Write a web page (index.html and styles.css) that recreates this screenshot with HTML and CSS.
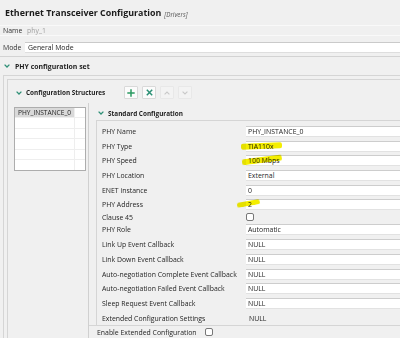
FILE: index.html
```html
<!DOCTYPE html>
<html>
<head>
<meta charset="utf-8">
<link rel="stylesheet" href="styles.css">
</head>
<body>
<div class="title"><span class="title-main">Ethernet Transceiver Configuration</span><span class="title-tag">[Drivers]</span></div>
<div class="name-row"><span class="top-lbl">Name</span><span class="name-val">phy_1</span></div>
<div class="mode-row"><span class="top-lbl mode-lbl">Mode</span><div class="mode-input">General Mode</div></div>
<div class="section-head">
  <svg class="chev" width="6" height="4" viewBox="0 0 6 4"><path d="M0.6 0.6 L3 3 L5.4 0.6" stroke="#2f9077" stroke-width="1.3" fill="none"/></svg>
  <span>PHY configuration set</span>
</div>
<div class="outer">
  <div class="inner">
    <div class="cs-head">
      <div class="cs-title">
        <svg class="chev" width="6" height="4" viewBox="0 0 6 4"><path d="M0.6 0.6 L3 3 L5.4 0.6" stroke="#2f9077" stroke-width="1.3" fill="none"/></svg>
        <span>Configuration Structures</span>
      </div>
      <div class="tools">
        <div class="tbtn"><svg width="8" height="8" viewBox="0 0 8 8"><path d="M4 0.3V7.7M0.3 4H7.7" stroke="#2b9a62" stroke-width="1.5"/></svg></div>
        <div class="tbtn"><svg width="7" height="7" viewBox="0 0 7 7"><path d="M0.8 0.8L6.2 6.2M6.2 0.8L0.8 6.2" stroke="#2a8f74" stroke-width="1.5"/></svg></div>
        <div class="tbtn dis"><svg width="6" height="4" viewBox="0 0 6 4"><path d="M0.6 3.4 L3 1 L5.4 3.4" stroke="#c9c9c9" stroke-width="1.1" fill="none"/></svg></div>
        <div class="tbtn dis"><svg width="6" height="4" viewBox="0 0 6 4"><path d="M0.6 0.6 L3 3 L5.4 0.6" stroke="#c9c9c9" stroke-width="1.1" fill="none"/></svg></div>
      </div>
    </div>
    <div class="panes">
      <div class="left-pane">
        <div class="list">
          <div class="lrow sel"><span class="lcell">PHY_INSTANCE_0</span><span class="lcell2"></span></div>
          <div class="lrow"><span class="lcell"></span><span class="lcell2"></span></div>
          <div class="lrow"><span class="lcell"></span><span class="lcell2"></span></div>
          <div class="lrow"><span class="lcell"></span><span class="lcell2"></span></div>
          <div class="lrow"><span class="lcell"></span><span class="lcell2"></span></div>
          <div class="lrow last"><span class="lcell"></span><span class="lcell2"></span></div>
        </div>
      </div>
      <div class="right-pane">
        <div class="sc-head">
          <svg class="chev" width="6" height="4" viewBox="0 0 6 4"><path d="M0.6 0.6 L3 3 L5.4 0.6" stroke="#2f9077" stroke-width="1.3" fill="none"/></svg>
          <span>Standard Configuration</span>
        </div>
        <div class="group">
          <div class="row"><span class="lbl">PHY Name</span><div class="val"><div class="inp">PHY_INSTANCE_0</div></div></div>
          <div class="row"><span class="lbl">PHY Type</span><div class="val"><div class="inp">TIA110x</div><span class="hl hl-type"></span></div></div>
          <div class="row"><span class="lbl">PHY Speed</span><div class="val"><div class="inp">100 Mbps</div><span class="hl hl-speed"></span></div></div>
          <div class="row"><span class="lbl">PHY Location</span><div class="val"><div class="inp">External</div></div></div>
          <div class="row"><span class="lbl">ENET instance</span><div class="val"><div class="inp">0</div></div></div>
          <div class="row"><span class="lbl">PHY Address</span><div class="val"><div class="inp">2</div><span class="hl hl-addr"></span></div></div>
          <div class="row row-check"><span class="lbl">Clause 45</span><div class="val"><span class="cbox"></span></div></div>
          <div class="row"><span class="lbl">PHY Role</span><div class="val"><div class="inp">Automatic</div></div></div>
          <div class="row"><span class="lbl">Link Up Event Callback</span><div class="val"><div class="inp">NULL</div></div></div>
          <div class="row"><span class="lbl">Link Down Event Callback</span><div class="val"><div class="inp">NULL</div></div></div>
          <div class="row"><span class="lbl">Auto-negotiation Complete Event Callback</span><div class="val"><div class="inp">NULL</div></div></div>
          <div class="row"><span class="lbl">Auto-negotiation Failed Event Callback</span><div class="val"><div class="inp">NULL</div></div></div>
          <div class="row"><span class="lbl">Sleep Request Event Callback</span><div class="val"><div class="inp">NULL</div></div></div>
          <div class="row"><span class="lbl">Extended Configuration Settings</span><div class="val"><span class="plain">NULL</span></div></div>
        </div>
        <div class="enable-row"><span class="enable-lbl">Enable Extended Configuration</span><span class="cbox"></span></div>
      </div>
    </div>
  </div>
</div>
</body>
</html>
```
FILE: styles.css
```css
html, body {
  margin: 0;
  padding: 0;
}
body {
  background: #f0f0f0;
  font-family: "Open Sans", "Noto Sans", sans-serif;
  font-size: 6.9px;
  color: #1e1e1e;
  width: 400px;
  height: 338px;
  overflow: hidden;
}
.title {
  height: 25px;
  display: flex;
  align-items: center;
  padding-left: 5px;
  gap: 3px;
}
.title-main {
  font-weight: 700;
  font-size: 8.9px;
  color: #1b1b1b;
}
.title-tag {
  font-style: italic;
  font-size: 6.3px;
  color: #555;
  margin-top: 3px;
}
.name-row {
  height: 9px;
  border-top: 1px solid #f9f9f9;
  border-bottom: 1px solid #f9f9f9;
  display: flex;
  align-items: center;
  padding-left: 3px;
}
.top-lbl {
  width: 24px;
  color: #333;
}
.mode-lbl {
  width: 22px;
}
.name-val {
  color: #a0a0a0;
}
.mode-row {
  display: flex;
  align-items: center;
  padding: 6px 0 3px 3px;
  border-bottom: 1px solid #d3d3d3;
}
.mode-input {
  flex: 1;
  height: 11px;
  box-sizing: border-box;
  background: #fff;
  border-top: 1px solid #cacaca;
  border-bottom: 1px solid #dedede;
  padding-left: 3px;
  display: flex;
  align-items: center;
}
.section-head {
  height: 18px;
  display: flex;
  align-items: center;
  gap: 5px;
  padding-left: 4px;
  font-weight: 700;
  font-size: 6.9px;
}
.chev {
  display: block;
  flex: none;
}
.outer {
  margin-left: 3px;
  border-top: 1px solid #d5d5d5;
  border-left: 1px solid #d5d5d5;
  padding: 3px 0 0 3px;
  height: 260px;
}
.inner {
  border-top: 1px solid #d5d5d5;
  border-left: 1px solid #d5d5d5;
  height: 100%;
}
.cs-head {
  display: flex;
  align-items: center;
  padding: 6px 0 0 8px;
  height: 13px;
}
.cs-title {
  width: 108px;
  display: flex;
  align-items: center;
  gap: 4px;
  font-weight: 700;
  font-size: 6.4px;
}
.tools {
  display: flex;
  gap: 4px;
}
.tbtn {
  width: 14px;
  height: 13px;
  box-sizing: border-box;
  border: 1px solid #d9d9d9;
  background: #fbfbfb;
  border-radius: 1px;
  display: flex;
  align-items: center;
  justify-content: center;
}
.tbtn.dis {
  background: #f3f3f3;
  border-color: #e8e8e8;
}
.panes {
  display: flex;
  margin-top: 4px;
  height: 235px;
}
.left-pane {
  width: 80px;
  box-sizing: border-box;
  padding: 4px 2px 0 6px;
}
.list {
  background: #fff;
  border: 1px solid #adadad;
  height: 64px;
  box-sizing: border-box;
}
.lrow {
  display: flex;
  height: 10.4px;
  border-bottom: 1px solid #eeeeee;
  box-sizing: border-box;
}
.lrow.last {
  border-bottom: none;
}
.lcell {
  width: 60px;
  border-right: 1px solid #eeeeee;
  padding-left: 3px;
  box-sizing: border-box;
  display: flex;
  align-items: center;
  font-size: 6.6px;
  white-space: nowrap;
}
.lrow.sel .lcell {
  background: #d9d9d9;
}
.lcell2 {
  flex: 1;
}
.right-pane {
  flex: 1;
  border-left: 1px solid #d0d0d0;
  display: flex;
  flex-direction: column;
}
.sc-head {
  height: 14px;
  padding: 3px 0 0 9px;
  display: flex;
  align-items: center;
  gap: 4px;
  font-weight: 700;
  font-size: 6.4px;
}
.group {
  margin-left: 7px;
  border-top: 1px solid #d5d5d5;
  border-left: 1px solid #d5d5d5;
  padding-top: 3px;
  height: 201px;
}
.row {
  display: flex;
  align-items: center;
  height: 14.7px;
}
.row-check {
  height: 10.5px;
}
.lbl {
  width: 149px;
  flex: none;
  padding-left: 5px;
  box-sizing: border-box;
  white-space: nowrap;
}
.val {
  flex: 1;
  position: relative;
  display: flex;
  align-items: center;
}
.inp {
  flex: 1;
  height: 11px;
  box-sizing: border-box;
  background: #fff;
  border-top: 1px solid #cdcdcd;
  border-bottom: 1px solid #e2e2e2;
  padding-left: 2px;
  display: flex;
  align-items: center;
}
.plain {
  padding-left: 3px;
}
.cbox {
  width: 8px;
  height: 8px;
  box-sizing: border-box;
  border: 1px solid #777;
  border-radius: 2px;
  background: #fff;
  display: block;
}
.hl {
  position: absolute;
  background: #f4ee00;
  mix-blend-mode: multiply;
  border-radius: 2px;
}
.hl-type {
  left: -5px;
  top: 2px;
  width: 41px;
  height: 6px;
  transform: rotate(-2deg);
}
.hl-speed {
  left: -4px;
  top: 2px;
  width: 40px;
  height: 6px;
  transform: rotate(-7deg);
}
.hl-addr {
  left: -9px;
  top: 2px;
  width: 23px;
  height: 5px;
  transform: rotate(-10deg);
}
.enable-row {
  border-top: 1px solid #d5d5d5;
  height: 12px;
  display: flex;
  align-items: center;
  padding-left: 8px;
}
.enable-lbl {
  width: 108px;
}
```
